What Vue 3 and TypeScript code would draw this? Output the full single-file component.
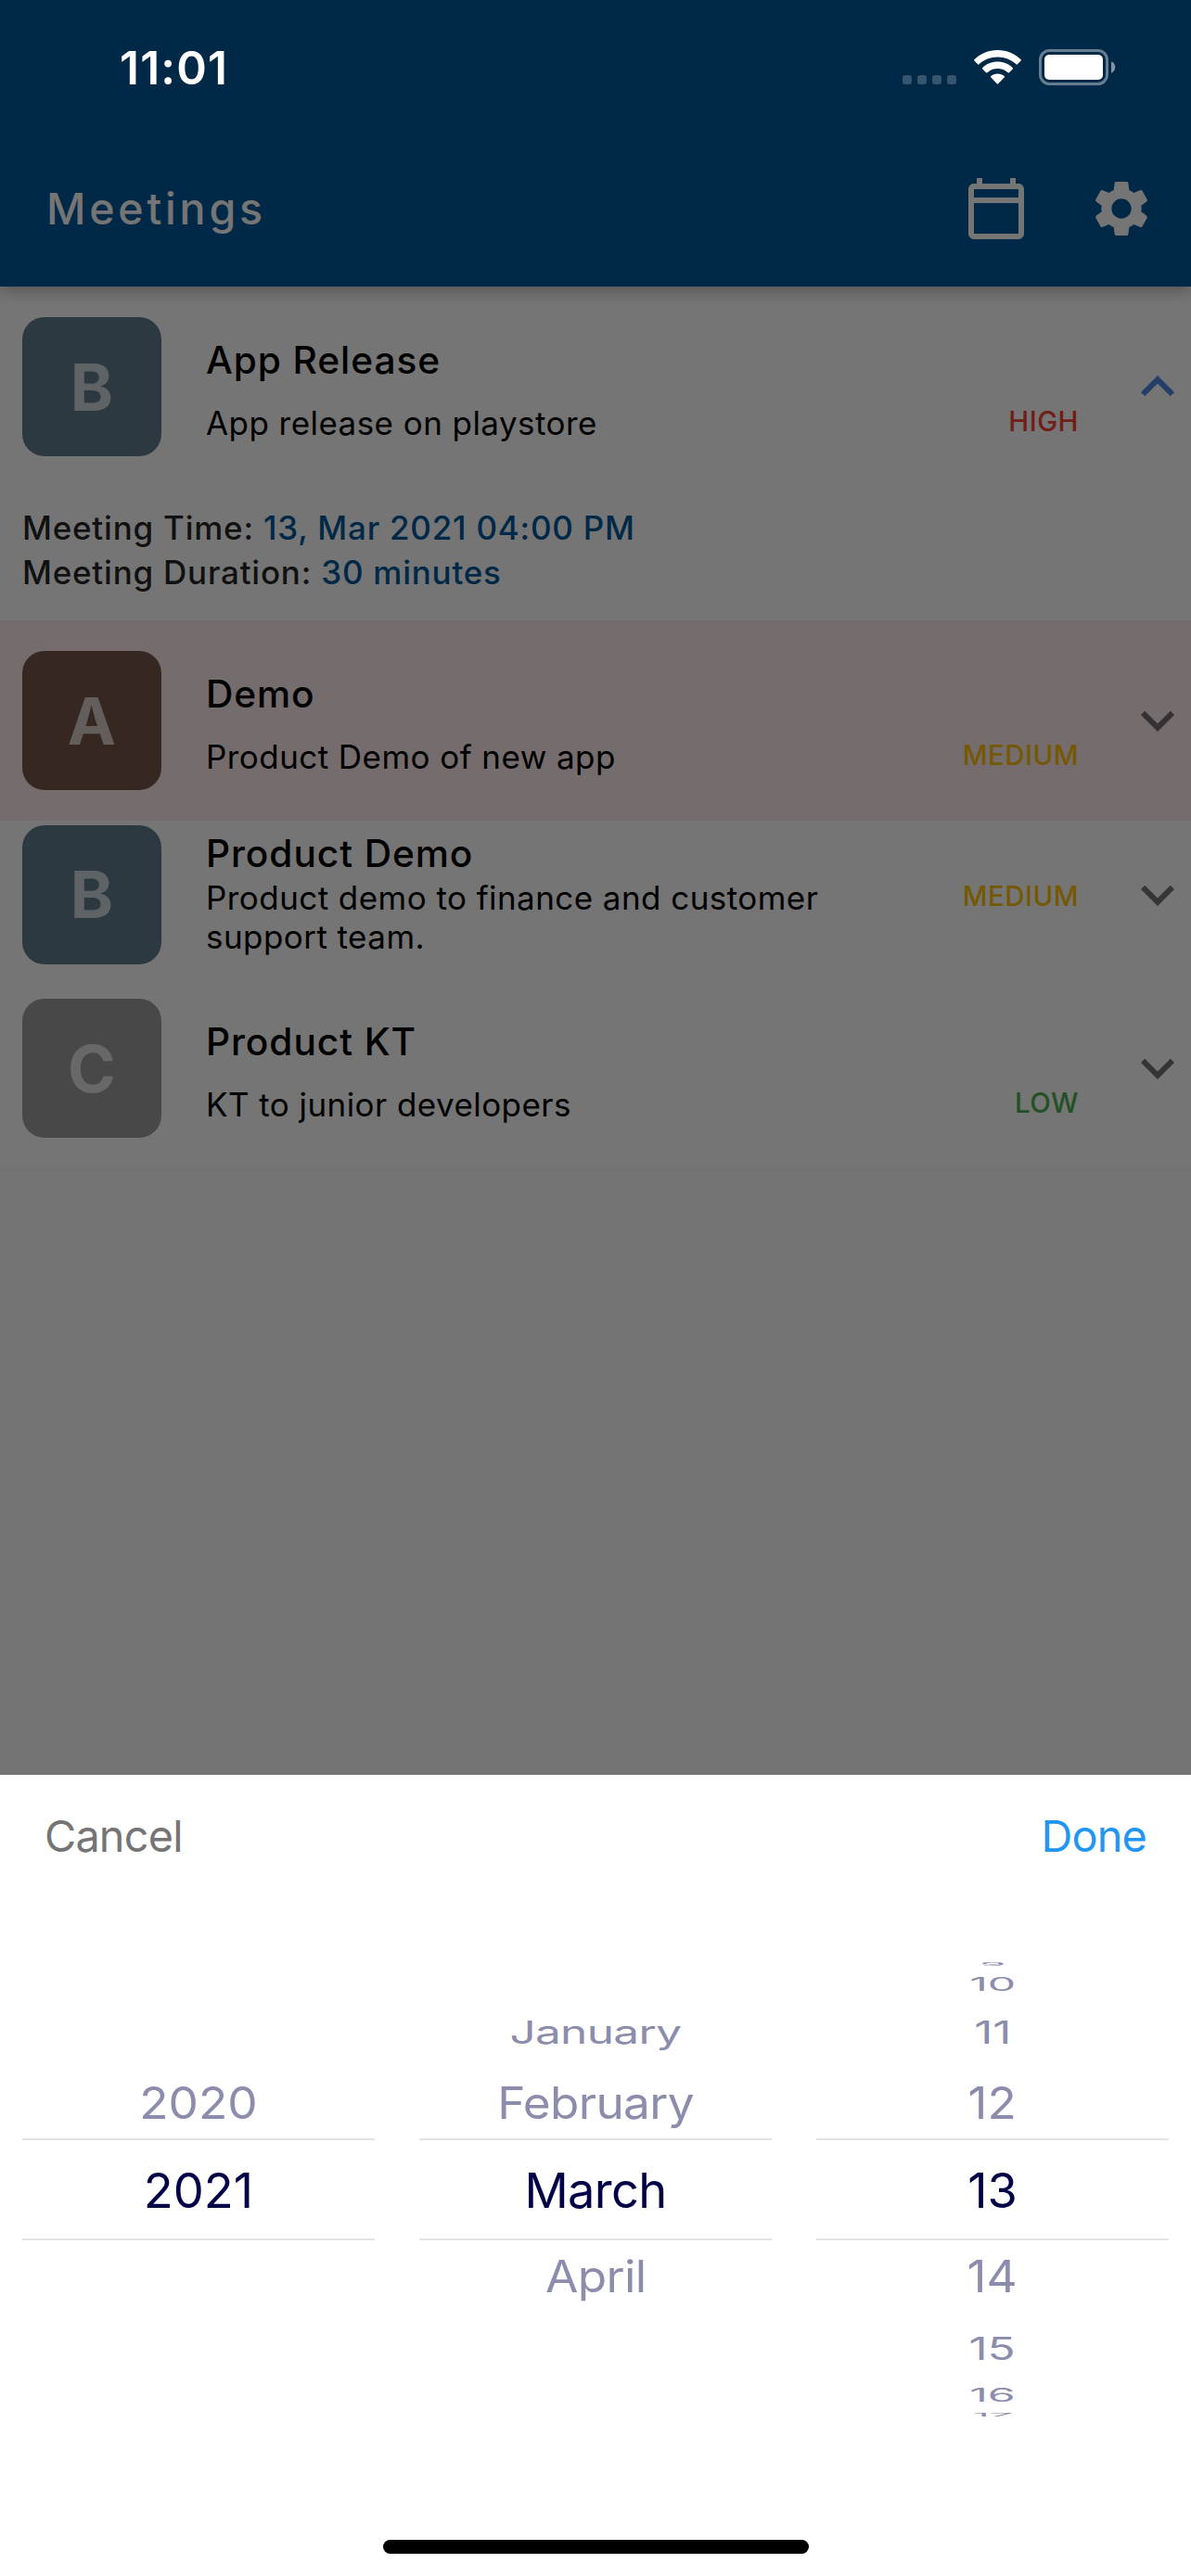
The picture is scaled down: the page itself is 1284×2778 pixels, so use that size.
<script setup lang="ts">
interface Meeting {
  group: string
  color: string
  title: string
  text: string
  priority: 'HIGH' | 'MEDIUM' | 'LOW'
  overdue?: boolean
  compact?: boolean
  time?: string
  duration?: string
}

interface WheelItem {
  label: string
  offset: number
}

const meetings: Meeting[] = [
  {
    group: 'B',
    color: '#607d8b',
    title: 'App Release',
    text: 'App release on playstore',
    priority: 'HIGH',
    time: '13, Mar 2021 04:00 PM',
    duration: '30 minutes',
  },
  { group: 'A', color: '#795548', title: 'Demo', text: 'Product Demo of new app', priority: 'MEDIUM', overdue: true },
  {
    group: 'B',
    color: '#607d8b',
    title: 'Product Demo',
    text: 'Product demo to finance and customer support team.',
    priority: 'MEDIUM',
    compact: true,
  },
  { group: 'C', color: '#9e9e9e', title: 'Product KT', text: 'KT to junior developers', priority: 'LOW' },
]

const wheels: { name: string; items: WheelItem[] }[] = [
  {
    name: 'year',
    items: [
      { label: '2020', offset: -1 },
      { label: '2021', offset: 0 },
    ],
  },
  {
    name: 'month',
    items: [
      { label: 'January', offset: -2 },
      { label: 'February', offset: -1 },
      { label: 'March', offset: 0 },
      { label: 'April', offset: 1 },
    ],
  },
  {
    name: 'day',
    items: [9, 10, 11, 12, 13, 14, 15, 16, 17].map((d) => ({ label: String(d), offset: d - 13 })),
  },
]

// Projection of each wheel step: vertical shift, horizontal and vertical scale.
const projection: Record<number, [number, number, number]> = {
  [-4]: [-243, 0.87, 0.1],
  [-3]: [-221, 0.92, 0.38],
  [-2]: [-170, 0.945, 0.66],
  [-1]: [-93, 0.98, 0.915],
  [0]: [1, 1, 1],
  [1]: [93.5, 0.98, 0.915],
  [2]: [171, 0.945, 0.66],
  [3]: [221.5, 0.92, 0.38],
  [4]: [243, 0.87, 0.1],
}

function place(item: WheelItem) {
  const [y, sx, sy] = projection[item.offset]
  return { transform: `translateY(${y}px) scale(${sx}, ${sy})` }
}
</script>

<template>
  <div class="screen">
    <div class="page">
      <header class="appbar">
        <h1>Meetings</h1>
        <div class="actions">
          <svg class="calendar" viewBox="0 0 24 24">
            <path d="M20 3h-1V1h-2v2H7V1H5v2H4c-1.1 0-2 .9-2 2v16c0 1.1.9 2 2 2h16c1.1 0 2-.9 2-2V5c0-1.1-.9-2-2-2zm0 18H4V10h16v11zm0-13H4V5h16v3z" />
          </svg>
          <svg class="gear" viewBox="9 12 216 216">
            <path fill-rule="evenodd" d="M100 33H134Q138 33 139 37L142 60Q150 63 157 69L179 60Q183 59 185 63L200 90Q202 94 199 97L181 110Q183 120 181 130L199 143Q202 146 200 150L185 177Q183 181 179 180L157 171Q150 177 142 180L139 203Q138 207 134 207H100Q96 207 95 203L92 180Q84 177 77 171L55 180Q51 181 49 177L34 150Q32 146 35 143L53 130Q51 120 53 110L35 97Q32 94 34 90L49 63Q51 59 55 60L77 69Q84 63 92 60L95 37Q96 33 100 33ZM117 88A32 32 0 1 0 117 152A32 32 0 1 0 117 88Z" />
          </svg>
        </div>
      </header>

      <main class="list">
        <article v-for="m in meetings" :key="m.title" class="meeting" :class="{ overdue: m.overdue }">
          <div class="tile" :class="{ compact: m.compact }">
            <div class="avatar" :style="{ background: m.color }">{{ m.group }}</div>
            <div class="body">
              <h2>{{ m.title }}</h2>
              <div class="line">
                <p>{{ m.text }}</p>
                <span class="priority" :class="m.priority.toLowerCase()">{{ m.priority }}</span>
              </div>
            </div>
            <svg class="chevron" :class="{ open: m.time }" viewBox="0 0 24 24">
              <path d="M16.59 8.59L12 13.17 7.41 8.59 6 10l6 6 6-6z" />
            </svg>
          </div>
          <div v-if="m.time" class="details">
            <div>Meeting Time: <b>{{ m.time }}</b></div>
            <div>Meeting Duration: <b>{{ m.duration }}</b></div>
          </div>
        </article>
      </main>
    </div>

    <div class="scrim"></div>

    <div class="statusbar">
      <span class="clock">11:01</span>
      <div class="indicators">
        <div class="cell"><i v-for="n in 4" :key="n"></i></div>
        <svg class="wifi" viewBox="0 0 51 37">
          <path d="M25.5 0C35.3 0 44.300 3.800 50.600 10.200Q51.300 10.900 50.600 11.600L46.900 15.300Q46.200 16 45.500 15.300C40.300 10.300 33.200 7.400 25.500 7.400S10.700 10.300 5.500 15.300Q4.800 16 4.100 15.300L.4 11.600Q-.3 10.900 .4 10.200C6.700 3.800 15.700 0 25.500 0z" />
          <path d="M25.500 12.600C31.800 12.600 37.500 15 41.700 19Q42.400 19.700 41.700 20.400L38 24.200Q37.300 24.900 36.600 24.200C33.700 21.500 29.800 20 25.500 20S17.300 21.500 14.400 24.200Q13.700 24.900 13 24.200L9.300 20.400Q8.600 19.700 9.300 19C13.500 15 19.200 12.600 25.500 12.600z" />
          <path d="M25.500 25.400C28.300 25.400 30.800 26.400 32.700 28.100Q33.400 28.800 32.700 29.500L26.200 36.200Q25.500 36.900 24.800 36.200L18.300 29.500Q17.600 28.800 18.300 28.100C20.200 26.400 22.700 25.400 25.500 25.400z" />
        </svg>
        <svg class="battery" viewBox="0 0 83 39">
          <rect x="1.500" y="1.500" width="72" height="36" rx="10" fill="none" stroke="#fff" stroke-opacity=".4" stroke-width="3" />
          <rect x="6" y="6" width="63" height="27" rx="5" />
          <path d="M78 13.200C80.600 14.300 82.300 16.700 82.300 19.500S80.600 24.700 78 25.800z" fill-opacity=".5" />
        </svg>
      </div>
    </div>

    <section class="sheet">
      <div class="toolbar">
        <span class="cancel">Cancel</span>
        <span class="done">Done</span>
      </div>
      <div class="picker">
        <div v-for="w in wheels" :key="w.name" class="wheel" :class="w.name">
          <div class="band"></div>
          <span
            v-for="item in w.items"
            :key="item.label"
            class="item"
            :class="{ selected: item.offset === 0 }"
            :style="place(item)"
          >{{ item.label }}</span>
        </div>
      </div>
      <div class="home"></div>
    </section>
  </div>
</template>

<style>
body {
  margin: 0;
}
</style>

<style scoped>
.screen {
  position: relative;
  width: 1284px;
  height: 2778px;
  overflow: hidden;
  font-family: Inter, 'Liberation Sans', sans-serif;
}
.page {
  height: 100%;
  background: #fafafa;
}
.appbar {
  position: relative;
  z-index: 1;
  box-sizing: border-box;
  height: 309px;
  padding: 141px 39px 0 50px;
  display: flex;
  justify-content: space-between;
  align-items: center;
  background: #01579b;
  box-shadow: 0 4px 16px rgba(0, 0, 0, 0.3);
  color: #fff;
}
h1 {
  margin: 0;
  font-size: 46.5px;
  font-weight: 500;
  letter-spacing: 3.8px;
}
.actions {
  display: flex;
  gap: 63px;
}
.actions svg {
  width: 72px;
  height: 72px;
  fill: #fff;
}
.list {
  background: #fff;
}
.overdue {
  background: #ffebee;
}
.tile {
  display: flex;
  align-items: center;
  height: 216px;
  padding: 0 0 0 24px;
}
.tile.compact {
  height: 159px;
}
.avatar {
  flex: none;
  width: 150px;
  height: 150px;
  border-radius: 24px;
  display: flex;
  align-items: center;
  justify-content: center;
  font-size: 70px;
  font-weight: 700;
  color: rgba(255, 255, 255, 0.7);
}
.body {
  width: 941px;
  margin-left: 48px;
  padding-top: 7px;
}
.compact .body {
  padding: 0 0 2px;
}
h2 {
  margin: 0;
  font-size: 40.7px;
  line-height: 50px;
  font-weight: 500;
  letter-spacing: 0.9px;
  color: #000;
}
.line {
  display: flex;
  justify-content: space-between;
  align-items: flex-start;
  margin-top: 21px;
}
.compact .line {
  margin-top: 1px;
}
p {
  margin: 0;
  width: 690px;
  font-size: 35px;
  line-height: 42px;
  letter-spacing: 0.44px;
  color: #000;
}
.priority {
  font-size: 29.4px;
  line-height: 40px;
  font-weight: 500;
  letter-spacing: 0.5px;
}
.high {
  color: #f44336;
}
.medium {
  color: #ffc107;
}
.low {
  color: #4caf50;
}
.chevron {
  flex: none;
  width: 72px;
  height: 72px;
  margin-left: 49px;
  fill: rgba(0, 0, 0, 0.54);
}
.chevron.open {
  transform: rotate(180deg);
  fill: #5088e0;
}
.details {
  box-sizing: border-box;
  height: 144px;
  padding: 20px 24px 0;
  font-size: 35px;
  line-height: 48px;
  font-weight: 500;
  letter-spacing: 0.77px;
  color: rgba(0, 0, 0, 0.87);
}
.details b {
  font-weight: 500;
  color: #01579b;
}
.scrim {
  position: absolute;
  inset: 0;
  z-index: 2;
  background: rgba(0, 0, 0, 0.54);
}
.statusbar {
  position: absolute;
  z-index: 3;
  top: 0;
  left: 0;
  right: 0;
  height: 141px;
  box-sizing: border-box;
  padding: 53px 81px 0 129px;
  display: flex;
  justify-content: space-between;
  align-items: flex-start;
  color: #fff;
}
.clock {
  margin-top: 1px;
  font-size: 49.5px;
  line-height: 39px;
  font-weight: 600;
  letter-spacing: 1.2px;
}
.indicators {
  display: flex;
  align-items: flex-start;
  fill: #fff;
}
.cell {
  display: flex;
  gap: 6px;
  margin: 28px 19px 0 0;
}
.cell i {
  width: 10px;
  height: 10px;
  border-radius: 3px;
  background: rgba(255, 255, 255, 0.21);
}
.wifi {
  width: 51px;
  height: 37px;
  margin: 1px 19px 0 0;
}
.battery {
  width: 83px;
  height: 39px;
}
.sheet {
  position: absolute;
  z-index: 4;
  left: 0;
  right: 0;
  bottom: 0;
  height: 864px;
  background: #fff;
}
.toolbar {
  display: flex;
  justify-content: space-between;
  align-items: center;
  height: 132px;
  padding: 0 48px;
  font-size: 46.8px;
  letter-spacing: -0.8px;
}
.cancel {
  color: #757575;
}
.done {
  color: #2196f3;
}
.picker {
  display: grid;
  grid-template-columns: repeat(3, 1fr);
  height: 630px;
}
.wheel {
  display: grid;
  padding: 0 24px;
  justify-items: center;
  align-items: center;
}
.wheel.month {
  letter-spacing: -0.7px;
}
.wheel > * {
  grid-area: 1 / 1;
}
.band {
  box-sizing: border-box;
  width: 100%;
  height: 110px;
  border: solid #e4e4e4;
  border-width: 2px 0;
}
.item {
  font-size: 52.4px;
  color: #8c8cad;
}
.item.selected {
  color: #000046;
}
.home {
  width: 459px;
  height: 15px;
  margin: 63px auto 0;
  border-radius: 8px;
  background: #000;
}
</style>
